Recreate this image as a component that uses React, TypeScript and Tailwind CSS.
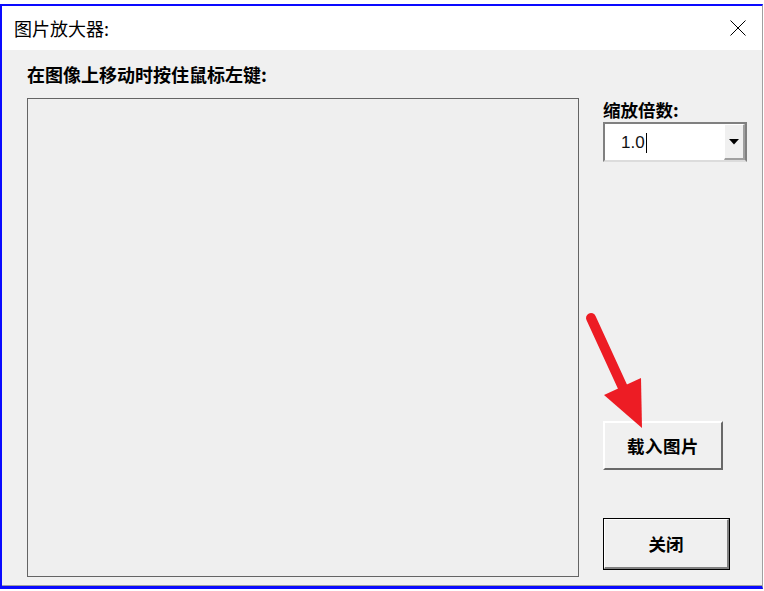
const cjk = "font-['Noto_Sans_CJK_SC',sans-serif]";

function CloseIcon() {
  return (
    <svg width="16" height="16" viewBox="0 0 16 16" className="block">
      <path d="M0.5 0.5 L15.5 15.5 M15.5 0.5 L0.5 15.5" stroke="#000" strokeWidth="1" fill="none" />
    </svg>
  );
}

function ZoomCombo() {
  return (
    <div className="w-[144px] h-[40px] mt-[2px] border-2 border-[#808080] border-b-[#dcdcdc] bg-white flex">
      <div className="flex-1 flex items-center pl-[16px] pt-[1px]">
        <span className="font-['Liberation_Sans',sans-serif] text-[17px] leading-[20px] text-[#111]">1.0</span>
        <span className="w-px h-[20px] bg-black ml-[1px]" />
      </div>
      <div className="w-[21px] h-full bg-[#f0f0f0] border-t border-l border-white border-r-2 border-b-2 border-r-[#a0a0a0] border-b-[#a0a0a0] flex items-center justify-center">
        <svg width="10" height="6" viewBox="0 0 10 6" className="block">
          <path d="M0 0 H10 L5 5.5 Z" fill="#000" />
        </svg>
      </div>
    </div>
  );
}

export default function App() {
  return (
    <div className="relative w-[764px] h-[591px] bg-white pt-[4px] overflow-hidden">
      <div className="w-[763px] h-[585px] flex flex-col border-t-2 border-l-2 border-b-[3px] border-[#0a0aff] border-r border-r-[#a0a0a0]">
        {/* title bar */}
        <div className="h-[44px] bg-white flex items-center justify-between pl-[12px] pr-[16px]">
          <span className={`${cjk} text-[18px] leading-[22px] text-black`}>图片放大器:</span>
          <CloseIcon />
        </div>

        {/* body */}
        <div className="flex-1 bg-[#f0f0f0] border-b border-[#a0a0a0] flex pl-[25px]">
          <div className="flex flex-col">
            <p className={`${cjk} font-bold text-[18px] leading-[20px] text-black pt-[14px]`}>在图像上移动时按住鼠标左键:</p>
            <div className="w-[552px] h-[479px] mt-[14px] border border-[#646464] bg-[#efefef]" />
          </div>

          <div className="flex flex-col ml-[24px] pt-[50px]">
            <p className={`${cjk} font-bold text-[17.5px] leading-[20px] text-black`}>缩放倍数:</p>
            <ZoomCombo />

            <button className="w-[120px] h-[49px] mt-[259px] bg-[#f0f0f0] border-t-2 border-l-2 border-white border-r-2 border-b-2 border-r-[#696969] border-b-[#696969] flex items-center justify-center">
              <span className={`${cjk} font-bold text-[17.5px] leading-[20px] tracking-[0.5px] text-black`}>载入图片</span>
            </button>

            <button className="w-[127px] h-[52px] mt-[48px] border border-black bg-[#f0f0f0]">
              <div className="w-full h-full border-t border-l border-white border-r-2 border-b-2 border-r-[#808080] border-b-[#808080] flex items-center justify-center">
                <span className={`${cjk} font-bold text-[17.5px] leading-[20px] text-black`}>关闭</span>
              </div>
            </button>
          </div>
        </div>
      </div>

      {/* red annotation arrow */}
      <svg className="absolute left-0 top-0 pointer-events-none" width="764" height="591" viewBox="0 0 764 591">
        <line x1="591" y1="318" x2="624" y2="390" stroke="#ed1c24" strokeWidth="10" strokeLinecap="round" />
        <polygon points="604,395 641,378 642,428" fill="#ed1c24" />
      </svg>
    </div>
  );
}
